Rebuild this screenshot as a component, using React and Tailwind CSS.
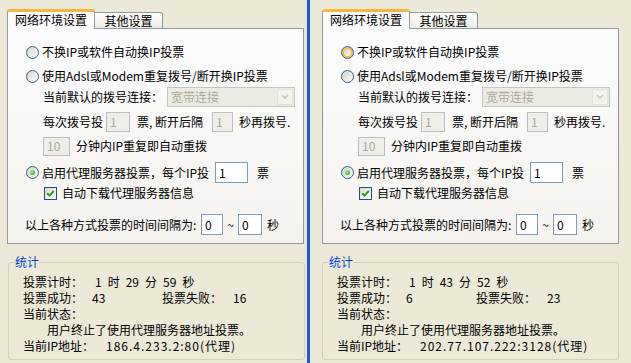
import React from "react";

const panes = [
  {
    hover: false,
    padding: "pl-[7px]",
    setMl: "ml-[1px]",
    time: ["1", "时", "29", "分", "59", "秒"],
    ok: "43",
    fail: "16",
    ip: "186.4.233.2:80(代理)",
  },
  {
    hover: true,
    padding: "pl-[12px]",
    setMl: "ml-0",
    time: ["1", "时", "43", "分", "52", "秒"],
    ok: "6",
    fail: "23",
    ip: "202.77.107.222:3128(代理)",
  },
];

function Radio({ checked, hover }) {
  return (
    <span
      className={`flex h-[13px] w-[13px] shrink-0 items-center justify-center rounded-full border border-[#33618f] bg-gradient-to-br from-[#d6d3c4] to-white ${
        hover ? "shadow-[inset_0_0_0_2px_#f9b849]" : ""
      }`}
    >
      {checked && (
        <span className="h-[5px] w-[5px] rounded-full bg-[radial-gradient(circle_at_35%_35%,#a6eba6,#1c9a1c)]" />
      )}
    </span>
  );
}

function Check() {
  return (
    <span className="flex h-[13px] w-[13px] shrink-0 items-center justify-center border border-[#1c5180] bg-gradient-to-br from-[#dcd9c8] to-white">
      <svg width="9" height="9" viewBox="0 0 9 9">
        <path d="M1.2 4.2 L3.5 6.6 L7.8 1.8" stroke="#21a121" strokeWidth="2" fill="none" />
      </svg>
    </span>
  );
}

function Field({ value, disabled, className }) {
  return (
    <div
      className={`flex shrink-0 items-center border pl-[3px] ${
        disabled
          ? "border-[#b9bec2] bg-[#efeee8] text-[#aca899]"
          : "border-[#7f9db9] bg-white text-black"
      } ${className}`}
    >
      {value}
    </div>
  );
}

function Pane({ p }) {
  return (
    <div className={`flex flex-col ${p.padding}`}>
      {/* tab strip */}
      <div className="flex h-[28px] items-end pt-[9px]">
        <div className="relative z-10 -mb-px flex h-[20px] w-[88px] items-center justify-center rounded-t-[3px] border-x border-t-[3px] border-x-[#919b9c] border-t-[#f8b541] bg-[#fcfcfe] pb-[1px]">
          网络环境设置
        </div>
        <div className="flex h-[16px] w-[68px] items-center justify-center rounded-tr-[3px] border-r border-t border-[#919b9c] bg-gradient-to-b from-white to-[#ecebe6]">
          其他设置
        </div>
      </div>

      {/* tab page */}
      <div className="flex h-[216px] w-[297px] flex-col border border-[#919b9c] bg-gradient-to-b from-[#fcfcfe] to-[#f4f3ee] pt-[12px]">
        <div className="ml-[18px] flex h-[22px] items-center gap-[3px]">
          <Radio hover={p.hover} />
          <span>不换IP或软件自动换IP投票</span>
        </div>
        <div className="ml-[18px] mt-[2px] flex h-[22px] items-center gap-[3px]">
          <Radio />
          <span>使用Adsl或Modem重复拨号/断开换IP投票</span>
        </div>
        <div className="ml-[35px] flex h-[20px] items-center">
          <span className="w-[124px]">当前默认的拨号连接：</span>
          <div className="flex h-[20px] w-[128px] items-center border border-[#c4c6c2] bg-[#ebebe4] pl-[3px] text-[#aca899]">
            <span className="flex-1">宽带连接</span>
            <span className="mr-px flex h-[16px] w-[16px] items-center justify-center rounded-[2px] border border-[#e2e0d6] bg-[#f3f2ec]">
              <svg width="8" height="6" viewBox="0 0 8 6">
                <path d="M1 1 L4 4 L7 1" stroke="#c9c7ba" strokeWidth="1.6" fill="none" />
              </svg>
            </span>
          </div>
        </div>
        <div className="ml-[35px] mt-[5px] flex h-[20px] items-center">
          <span className="w-[63px]">每次拨号投</span>
          <Field value="1" disabled className="h-[20px] w-[24px]" />
          <span className="w-[82px] pl-[7px]">票, 断开后隔</span>
          <Field value="1" disabled className="h-[20px] w-[21px]" />
          <span className="pl-[6px]">秒再拨号.</span>
        </div>
        <div className="ml-[35px] mt-[4px] flex h-[20px] items-center">
          <Field value="10" disabled className="h-[19px] w-[27px]" />
          <span className="pl-[6px]">分钟内IP重复即自动重拨</span>
        </div>
        <div className="ml-[18px] mt-[6px] flex h-[21px] items-center">
          <Radio checked />
          <span className="w-[176px] pl-[3px]">启用代理服务器投票，每个IP投</span>
          <Field value="1" className="h-[21px] w-[33px]" />
          <span className="pl-[9px]">票</span>
        </div>
        <div className="ml-[36px] mt-px flex h-[18px] items-center gap-[5px]">
          <Check />
          <span>自动下载代理服务器信息</span>
        </div>
        <div className="ml-[17px] mt-[12px] flex h-[21px] items-center">
          <span className="w-[176px]">以上各种方式投票的时间间隔为:</span>
          <Field value="0" className="h-[21px] w-[22px]" />
          <span className="w-[15px] text-center">~</span>
          <Field value="0" className="h-[21px] w-[24px]" />
          <span className="pl-[5px]">秒</span>
        </div>
      </div>

      {/* statistics */}
      <fieldset
        className={`mt-[11px] h-[105px] w-[297px] rounded-[3px] border border-[#d0d0bf] ${p.setMl}`}
      >
        <legend className="ml-[6px] leading-[14px] text-[#0046d5]">统计</legend>
        <div className="mt-[5px] flex flex-col pl-[14px]">
          <div className="flex h-[16px] items-center">
            <span className="w-[72px]">投票计时：</span>
            <span className="flex gap-[6px]">
              {p.time.map((t, i) => (
                <span key={i}>{t}</span>
              ))}
            </span>
          </div>
          <div className="flex h-[16px] items-center">
            <span className="w-[69px]">投票成功：</span>
            <span className="w-[70px]">{p.ok}</span>
            <span className="w-[71px]">投票失败：</span>
            <span>{p.fail}</span>
          </div>
          <div className="flex h-[16px] items-center">当前状态：</div>
          <div className="flex h-[16px] items-center pl-[24px]">
            用户终止了使用代理服务器地址投票。
          </div>
          <div className="flex h-[16px] items-center">
            <span className="w-[83px]">当前IP地址：</span>
            <span className="tracking-[1px]">{p.ip}</span>
          </div>
        </div>
      </fieldset>
    </div>
  );
}

export default function App() {
  return (
    <div className="flex h-[363px] w-[631px] overflow-hidden bg-[#ece9d8] font-['Noto_Sans_CJK_SC',sans-serif] text-[12px] leading-[16px] text-black">
      <div className="w-[307px] shrink-0">
        <Pane p={panes[0]} />
      </div>
      <div className="w-[3px] shrink-0 bg-[#1a5cd6]" />
      <div className="flex-1">
        <Pane p={panes[1]} />
      </div>
    </div>
  );
}
